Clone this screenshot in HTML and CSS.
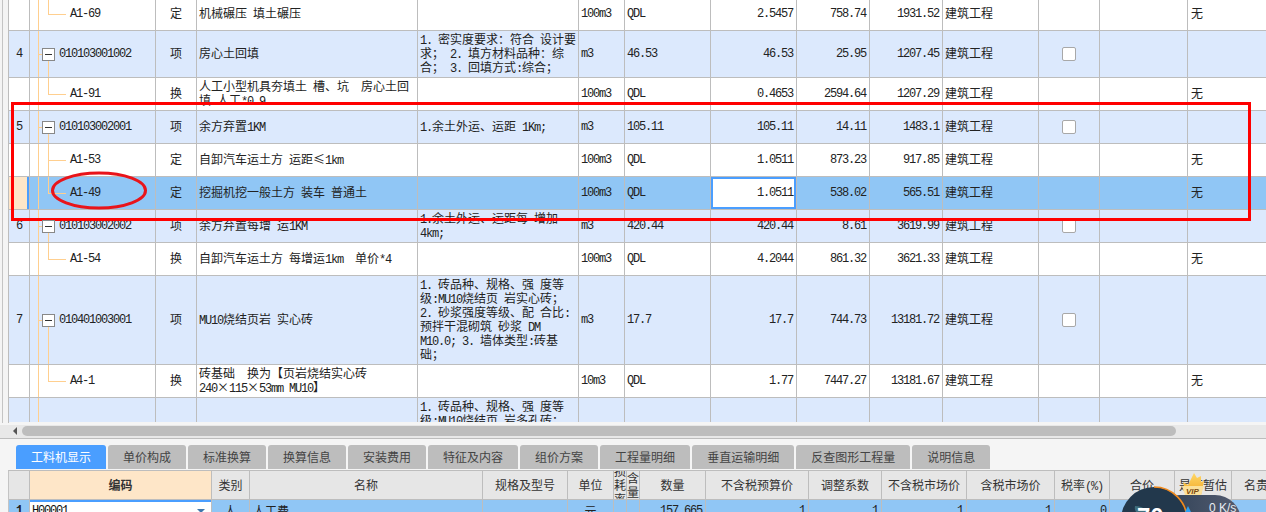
FILE: index.html
```html
<!DOCTYPE html>
<html lang="zh">
<head>
<meta charset="utf-8">
<title>工料机显示</title>
<link rel="stylesheet" href="styles.css">
</head>
<body>
<div class="app">
  <div class="upper">
    <div class="side"></div>
    <div class="upper-main">
      <div class="sheet">
        <table class="bill">
          <colgroup><col class="w1"><col class="w2"><col class="w3"><col class="w4"><col class="w5"><col class="w6"><col class="w7"><col class="w8"><col class="w9"><col class="w10"><col class="w11"><col class="w12"><col class="w13"><col class="w14"></colgroup>
          <tr class="r33">
            <td class="ctr num"></td><td class="code kid num">A1-69</td><td class="ctr">定</td><td>机械碾压<span class="m"> </span>填土碾压</td><td></td><td class="num">100m3</td><td class="num">QDL</td><td class="rt num">2.5457</td><td class="rt num">758.74</td><td class="rt num">1931.52</td><td>建筑工程</td><td></td><td></td><td>无</td>
          </tr>
          <tr class="blue r47">
            <td class="ctr num">4</td><td class="code par num"><span class="box"></span>010103001002</td><td class="ctr">项</td><td>房心土回填</td><td><span class="m">1. </span>密实度要求：符合<span class="m"> </span>设计要<br>求；<span class="m"> 2. </span>填方材料品种：综<br>合；<span class="m"> 3. </span>回填方式<span class="m">:</span>综合；</td><td class="num">m3</td><td class="num">46.53</td><td class="rt num">46.53</td><td class="rt num">25.95</td><td class="rt num">1207.45</td><td>建筑工程</td><td class="ctr"><span class="check"></span></td><td></td><td></td>
          </tr>
          <tr class="r33">
            <td class="ctr num"></td><td class="code kid num">A1-91</td><td class="ctr">换</td><td>人工小型机具夯填土<span class="m"> </span>槽、坑<span class="m">  </span>房心土回<br>填<span class="m"> </span>人工<span class="m">*0.9</span></td><td></td><td class="num">100m3</td><td class="num">QDL</td><td class="rt num">0.4653</td><td class="rt num">2594.64</td><td class="rt num">1207.29</td><td>建筑工程</td><td></td><td></td><td>无</td>
          </tr>
          <tr class="blue r33">
            <td class="ctr num">5</td><td class="code par num"><span class="box"></span>010103002001</td><td class="ctr">项</td><td>余方弃置<span class="m">1KM</span></td><td><span class="m">1.</span>余土外运、运距<span class="m"> 1Km;</span></td><td class="num">m3</td><td class="num">105.11</td><td class="rt num">105.11</td><td class="rt num">14.11</td><td class="rt num">1483.1</td><td>建筑工程</td><td class="ctr"><span class="check"></span></td><td></td><td></td>
          </tr>
          <tr class="r33">
            <td class="ctr num"></td><td class="code kid mid num">A1-53</td><td class="ctr">定</td><td>自卸汽车运土方<span class="m"> </span>运距≤<span class="m">1km</span></td><td></td><td class="num">100m3</td><td class="num">QDL</td><td class="rt num">1.0511</td><td class="rt num">873.23</td><td class="rt num">917.85</td><td>建筑工程</td><td></td><td></td><td>无</td>
          </tr>
          <tr class="sel r33">
            <td class="mark"></td><td class="code kid num">A1-49</td><td class="ctr">定</td><td>挖掘机挖一般土方<span class="m"> </span>装车<span class="m"> </span>普通土</td><td></td><td class="num">100m3</td><td class="num">QDL</td><td class="rt num focus">1.0511</td><td class="rt num">538.02</td><td class="rt num">565.51</td><td>建筑工程</td><td></td><td></td><td>无</td>
          </tr>
          <tr class="blue r33">
            <td class="ctr num">6</td><td class="code par num"><span class="box"></span>010103002002</td><td class="ctr">项</td><td>余方弃置每增<span class="m"> </span>运<span class="m">1KM</span></td><td><span class="m">1.</span>余土外运、运距每<span class="m"> </span>增加<br><span class="m">4km;</span></td><td class="num">m3</td><td class="num">420.44</td><td class="rt num">420.44</td><td class="rt num">8.61</td><td class="rt num">3619.99</td><td>建筑工程</td><td class="ctr"><span class="check"></span></td><td></td><td></td>
          </tr>
          <tr class="r33">
            <td class="ctr num"></td><td class="code kid num">A1-54</td><td class="ctr">换</td><td>自卸汽车运土方<span class="m"> </span>每增运<span class="m">1km  </span>单价<span class="m">*4</span></td><td></td><td class="num">100m3</td><td class="num">QDL</td><td class="rt num">4.2044</td><td class="rt num">861.32</td><td class="rt num">3621.33</td><td>建筑工程</td><td></td><td></td><td>无</td>
          </tr>
          <tr class="blue r89">
            <td class="ctr num">7</td><td class="code par num"><span class="box"></span>010401003001</td><td class="ctr">项</td><td><span class="m">MU10</span>烧结页岩<span class="m"> </span>实心砖</td><td><span class="m">1. </span>砖品种、规格、强<span class="m"> </span>度等<br>级<span class="m">:MU10</span>烧结页<span class="m"> </span>岩实心砖；<br><span class="m">2. </span>砂浆强度等级、配<span class="m"> </span>合比<span class="m">:</span><br>预拌干混砌筑<span class="m"> </span>砂浆<span class="m"> DM</span><br><span class="m">M10.0; 3. </span>墙体类型<span class="m">:</span>砖基<br>础；</td><td class="num">m3</td><td class="num">17.7</td><td class="rt num">17.7</td><td class="rt num">744.73</td><td class="rt num">13181.72</td><td>建筑工程</td><td class="ctr"><span class="check"></span></td><td></td><td></td>
          </tr>
          <tr class="r33">
            <td class="ctr num"></td><td class="code kid num">A4-1</td><td class="ctr">换</td><td>砖基础<span class="m">  </span>换为【页岩烧结实心砖<br><span class="m">240</span>×<span class="m">115</span>×<span class="m">53mm MU10</span>】</td><td></td><td class="num">10m3</td><td class="num">QDL</td><td class="rt num">1.77</td><td class="rt num">7447.27</td><td class="rt num">13181.67</td><td>建筑工程</td><td></td><td></td><td>无</td>
          </tr>
          <tr class="blue r89">
            <td class="ctr num"></td><td class="code num"></td><td></td><td></td><td><span class="m">1. </span>砖品种、规格、强<span class="m"> </span>度等<br>级<span class="m">:MU10</span>烧结页<span class="m"> </span>岩多孔砖；<br><span class="m">2. </span>砂浆强度等级、配<span class="m"> </span>合比<span class="m">:</span><br>预拌干混砌筑<span class="m"> </span>砂浆<span class="m"> DM</span><br><span class="m">M10.0; 3. </span>墙体类型<span class="m">:</span>砖墙<br>体；</td><td></td><td></td><td></td><td></td><td></td><td></td><td></td><td></td><td></td>
          </tr>
        </table>
      </div>
      <div class="hscroll">
        <span class="arrow"></span>
        <span class="thumb"></span>
      </div>
    </div>
  </div>

  <div class="tabs">
    <span class="tab on">工料机显示</span>
    <span class="tab">单价构成</span>
    <span class="tab">标准换算</span>
    <span class="tab">换算信息</span>
    <span class="tab">安装费用</span>
    <span class="tab">特征及内容</span>
    <span class="tab">组价方案</span>
    <span class="tab">工程量明细</span>
    <span class="tab">垂直运输明细</span>
    <span class="tab">反查图形工程量</span>
    <span class="tab">说明信息</span>
  </div>

  <div class="lower">
    <table class="res">
      <colgroup><col class="k1"><col class="k2"><col class="k3"><col class="k4"><col class="k5"><col class="k6"><col class="k7"><col class="k8"><col class="k9"><col class="k10"><col class="k11"><col class="k12"><col class="k13"><col class="k14"><col class="k15"><col class="k16"><col class="k17"></colgroup>
      <tr class="head">
        <th></th><th class="hot">编码</th><th>类别</th><th>名称</th><th>规格及型号</th><th>单位</th>
        <th><div class="narrow">损<br>耗<br>率</div></th><th><div class="narrow">含<br>量</div></th>
        <th>数量</th><th>不含税预算价</th><th>调整系数</th><th>不含税市场价</th><th>含税市场价</th><th>税率<span class="m">(%)</span></th><th>合价</th><th>是否暂估</th><th class="cut">名贵</th>
      </tr>
      <tr class="data">
        <td class="mark ctr num first">1</td>
        <td class="edit num">H00001<span class="drop"></span></td>
        <td class="ctr">人</td><td class="pad">人工费</td><td></td><td class="ctr">元</td><td></td><td></td>
        <td class="rt num">157.665</td><td class="rt num">1</td><td class="rt num">1</td><td class="rt num">1</td><td class="rt num">1</td><td class="rt num">0</td><td></td><td></td><td></td>
      </tr>
    </table>
  </div>
</div>

<div class="redbox"></div>
<svg class="ring" width="98" height="41" viewBox="0 0 98 41"><ellipse cx="49" cy="20.500" rx="46.500" ry="17.500"/></svg>

<svg class="speed" width="148" height="42" viewBox="0 0 148 42">
  <defs>
    <linearGradient id="pill" x1="0" x2="1" y1="0" y2="0"><stop offset="0" stop-color="#2c3f54"/><stop offset="1" stop-color="#545c70"/></linearGradient>
    <linearGradient id="gold" x1="0" x2="0" y1="0" y2="1"><stop offset="0" stop-color="#ffd866"/><stop offset="1" stop-color="#f0a526"/></linearGradient>
  </defs>
  <rect x="36" y="25" width="87" height="60" rx="26" fill="url(#pill)"/>
  <circle cx="36" cy="50" r="33" fill="#22384c"/>
  <path d="M36 17A33 33 0 0 1 69 50" fill="none" stroke="#f0891c" stroke-width="1.6"/>
  <path d="M17 36q10 0 13 8h-10q-4-3-3-8z" fill="#3f6f7d"/>
  <text x="19" y="55" class="pct">70</text>
  <path d="M67 42l3-6 3 6h-2v6h-2v-6z" fill="#2f9ff0"/>
  <text x="91" y="42" class="rate">0 K/s</text>
  <path d="M65 12l5 3 6-12 3 5 4-2 0 6 3-1-3 14H68z" fill="url(#gold)"/>
  <path d="M64 16h22l-3 9H67z" fill="#fbe09a"/>
  <text x="68" y="24" class="vip">VIP</text>
</svg>
</body>
</html>
```
FILE: styles.css
```css
* { box-sizing: border-box; }
html, body { margin: 0; padding: 0; height: 512px; overflow: hidden; }
body {
  position: relative;
  background: #f5f5f5;
  color: #222;
  font: 12px/14px "Noto Sans CJK SC", sans-serif;
}
.app { display: flex; flex-direction: column; height: 512px; overflow: hidden; }

/* latin runs: half-width like the original bitmap font */
.m, .num { font-family: "Liberation Mono", "Noto Sans CJK SC", monospace; font-size: 12px; letter-spacing: -1.2px; }
.m { line-height: 10px; }

.upper { display: flex; height: 439px; flex: none; }
.side {
  width: 9px; height: 423px; flex: none;
  background: linear-gradient(#c4c4c4, #c4c4c4) no-repeat 2px 0 / 1px 100%, #f4f4f4;
  border-right: 1px solid #bdbdbd;
}
.upper-main { flex: 1; min-width: 0; display: flex; flex-direction: column; }
.sheet { height: 422px; overflow: hidden; background: #fff; }

table { border-collapse: separate; border-spacing: 0; table-layout: fixed; }
.bill { margin-top: -2px; width: 1257px; }
.w1 { width: 21px; } .w2 { width: 126px; } .w3 { width: 41px; } .w4 { width: 221px; }
.w5 { width: 161px; } .w6 { width: 46px; } .w7 { width: 86px; } .w8 { width: 86px; }
.w9 { width: 73px; } .w10 { width: 73px; } .w11 { width: 96px; } .w12 { width: 61px; }
.w13 { width: 88px; } .w14 { width: 79px; }

.bill td {
  padding: 0 2px 2px 2px;
  border-right: 1px solid #bdbdbd;
  border-bottom: 1px solid #bdbdbd;
  white-space: pre;
  vertical-align: middle;
  overflow: hidden;
}
.bill td.num { padding-bottom: 0; }
.bill td:nth-child(14) { padding-left: 3px; }
.bill td:last-child { border-right: 0; }
.r33 { height: 33px; } .r47 { height: 47px; } .r89 { height: 89px; }
.blue { background: #dce9fd; }
.sel { background: #90c6f5; }
.ctr { text-align: center; }
.bill td.rt { text-align: right; padding-right: 3px; }

.bill td.mark { background: #fee6c8; box-shadow: inset -2px 0 #4a9eff; }
.bill td.focus { background: #fff; box-shadow: inset 0 0 0 2px #4a9eff; }

/* tree column */
.bill td.code {
  position: relative;
  overflow: visible;
  padding-left: 29px;
  background: linear-gradient(#ffcf8f, #ffcf8f) no-repeat 8px 0 / 1px 100%;
}
.bill td.kid { padding-left: 40px; }
.kid::after {
  content: ""; position: absolute; left: 18px; top: 0; width: 17px; height: 50%;
  border-left: 1px solid #ffcf8f; border-bottom: 1px solid #ffcf8f;
}
.mid::before, .par::after {
  content: ""; position: absolute; left: 18px; top: 50%; bottom: 0; width: 1px; background: #ffcf8f;
}
.par::before {
  content: ""; position: absolute; left: 9px; top: 50%; width: 3px; height: 1px; background: #ffcf8f;
}
.box {
  position: absolute; left: 12px; top: calc(50% - 6px); z-index: 1;
  width: 13px; height: 13px;
  background: #fff; border: 1px solid #888;
}
.box::after { content: ""; position: absolute; left: 2px; top: 5px; width: 7px; height: 1px; background: #333; }

.check {
  display: inline-block; width: 14px; height: 14px; vertical-align: middle;
  background: #fff; border: 1px solid #a8a8a8; border-radius: 2px;
}

/* horizontal scrollbar */
.hscroll {
  flex: 1; display: flex; align-items: center; gap: 5px;
  margin-top: 3px; padding: 0 0 2px 4px;
  background: #e8e8e8; border-bottom: 1px solid #bdbdbd;
  margin-left: -9px; padding-left: 13px;
}
.arrow { width: 0; height: 0; border: 4px solid transparent; border-left: 0; border-right-color: #555; }
.thumb { width: 1154px; height: 10px; background: #bdbdbd; border-radius: 5px; }

/* tabs */
.tabs { display: flex; gap: 2px; height: 31px; flex: none; padding: 6px 0 0 16px; }
.tab {
  height: 24px; padding: 0 15px; flex: none;
  background: #bdbdbd; color: #444;
  border-radius: 3px 3px 0 0;
  line-height: 24px;
}
.tab.on { background: #4a9eff; color: #fff; }

/* lower grid */
.lower { padding-left: 8px; flex: 1; }
.res { width: 1258px; border-top: 1px solid #bdbdbd; border-left: 1px solid #c4c4c4; }
.k1 { width: 21px; } .k2 { width: 182px; } .k3 { width: 38px; } .k4 { width: 233px; } .k5 { width: 85px; }
.k6 { width: 46px; } .k7 { width: 13px; } .k8 { width: 13px; } .k9 { width: 66px; } .k10 { width: 103px; }
.k11 { width: 73px; } .k12 { width: 85px; } .k13 { width: 88px; } .k14 { width: 55px; } .k15 { width: 65px; }
.k16 { width: 57px; } .k17 { width: 35px; }
.head { height: 29px; }
.head th {
  padding: 0; background: #e6e6e6; color: #333; font-weight: 400; white-space: nowrap;
  border-right: 1px solid #bdbdbd; border-bottom: 1px solid #bdbdbd; overflow: hidden;
}
.head th.hot { background: #fee6c8; font-weight: 700; }
.head th.cut { text-align: left; padding-left: 12px; border-right: 0; }
.narrow {
  display: flex; flex-direction: column; justify-content: center;
  height: 28px; overflow: hidden; line-height: 14px;
}
.data { height: 21px; background: #90c6f5; }
.data td { padding: 0 2px; border-right: 1px solid #bdbdbd; white-space: nowrap; overflow: hidden; }
.data td.rt { text-align: right; padding-right: 3px; }
.data td.first { box-shadow: none; font-weight: 700; }
.data td.pad { padding-left: 3px; }
.data td.edit { position: relative; background: #fff; box-shadow: inset 0 2px #4a9eff; padding-left: 2px; color: #111; }
.drop {
  position: absolute; right: 6px; top: 9px; width: 0; height: 0;
  border: 4px solid transparent; border-top: 4px solid #3f78ad; border-bottom: 0;
}

/* annotations laid over the screenshot */
.redbox {
  position: absolute; left: 11px; top: 102px; width: 1240px; height: 119px;
  border: 3px solid #f00;
}
.ring { position: absolute; left: 50px; top: 170px; }
.ring ellipse { fill: none; stroke: #e9141a; stroke-width: 3; }

/* network speed widget */
.speed { position: absolute; left: 1118px; top: 470px; }
.pct { fill: #fff; font: 700 24px "Liberation Sans", sans-serif; }
.rate { fill: #e8edf2; font: 12px "Liberation Sans", sans-serif; }
.vip { fill: #7a4a10; font: italic 700 8px "Liberation Sans", sans-serif; }
```
